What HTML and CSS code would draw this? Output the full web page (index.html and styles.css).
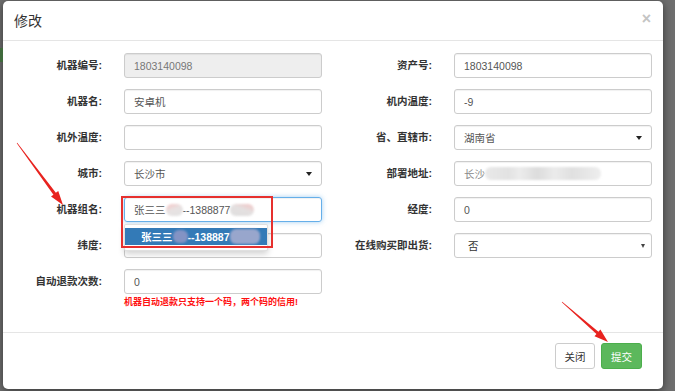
FILE: index.html
```html
<!DOCTYPE html>
<html lang="zh-CN">
<head>
    <meta charset="UTF-8">
    <title>修改</title>
    <link rel="stylesheet" href="styles.css">
</head>
<body>
    <div class="page-bit"></div>

    <div class="modal">
        <div class="modal-header">
            <span class="modal-title">修改</span>
            <span class="close">×</span>
        </div>

        <div class="modal-body">
            <div class="form-grid">
                <div class="form-group">
                    <label>机器编号:</label>
                    <div class="form-control disabled">1803140098</div>
                </div>
                <div class="form-group">
                    <label>资产号:</label>
                    <div class="form-control">1803140098</div>
                </div>

                <div class="form-group">
                    <label>机器名:</label>
                    <div class="form-control">安卓机</div>
                </div>
                <div class="form-group">
                    <label>机内温度:</label>
                    <div class="form-control">-9</div>
                </div>

                <div class="form-group">
                    <label>机外温度:</label>
                    <div class="form-control"></div>
                </div>
                <div class="form-group">
                    <label>省、直辖市:</label>
                    <div class="form-control select">湖南省<span class="caret"></span></div>
                </div>

                <div class="form-group">
                    <label>城市:</label>
                    <div class="form-control select">长沙市<span class="caret"></span></div>
                </div>
                <div class="form-group">
                    <label>部署地址:</label>
                    <div class="form-control muted">长沙<span class="blur blur-addr"></span></div>
                </div>

                <div class="form-group">
                    <label>机器组名:</label>
                    <div class="control-wrap">
                        <div class="form-control focus">张三三<span class="blur blur-a"></span>--1388877<span class="blur blur-b"></span></div>
                        <div class="typeahead">
                            <div class="typeahead-item active">张三三<span class="blur blur-c"></span>--138887<span class="blur blur-d"></span></div>
                        </div>
                        <div class="mark-box"></div>
                    </div>
                </div>
                <div class="form-group">
                    <label>经度:</label>
                    <div class="form-control">0</div>
                </div>

                <div class="form-group">
                    <label>纬度:</label>
                    <div class="form-control"></div>
                </div>
                <div class="form-group">
                    <label>在线购买即出货:</label>
                    <div class="form-control select native">否<span class="caret small"></span></div>
                </div>

                <div class="form-group">
                    <label>自动退款次数:</label>
                    <div class="control-wrap">
                        <div class="form-control">0</div>
                        <div class="help-text">机器自动退款只支持一个码，两个码的信用!</div>
                    </div>
                </div>
            </div>
        </div>

        <div class="modal-footer">
            <button class="btn btn-default">关闭</button>
            <button class="btn btn-success">提交</button>
        </div>
    </div>

    <!-- 标注箭头 -->
    <svg class="arrows" width="675" height="391" viewBox="0 0 675 391">
        <polygon points="16.76,143.18 53.43,194.63 51.02,196.42 63,205 58.26,191.04 55.85,192.83 17.24,142.82" />
        <polygon points="561.8,302.23 596.46,333.95 594.49,336.21 608,342 600.39,329.43 598.42,331.69 562.2,301.77" />
    </svg>
</body>
</html>
```

FILE: styles.css
```css
* {
    margin: 0;
    padding: 0;
    box-sizing: border-box;
}

body {
    width: 675px;
    height: 391px;
    overflow: hidden;
    background: #6e6e6e;
    font-family: 'Liberation Sans', 'Noto Sans CJK SC', sans-serif;
    font-size: 10.5px;
    color: #333;
    padding: 1px 0 0 3px;
}

.page-bit {
    position: absolute;
    left: 0;
    top: 48px;
    width: 3px;
    height: 14px;
    background: #3f6a3c;
}

.modal {
    width: 660px;
    height: 388px;
    background: white;
    border-radius: 5px;
    box-shadow: 0 2px 8px rgba(0, 0, 0, 0.5);
}

.modal-header {
    height: 40px;
    padding: 0 12px 0 11px;
    border-bottom: 1px solid #e5e5e5;
    display: flex;
    align-items: center;
    justify-content: space-between;
}

.modal-title {
    font-size: 14px;
    color: #333;
    margin-top: -2px;
}

.close {
    font-size: 16px;
    font-weight: bold;
    color: #c4c4c4;
    margin-top: -4px;
}

.modal-body {
    padding: 12px 0 24px;
}

.form-grid {
    display: grid;
    grid-template-columns: 330px 330px;
    row-gap: 11px;
}

.form-group {
    display: flex;
    align-items: flex-start;
}

.form-group label {
    width: 99px;
    margin-right: 22px;
    text-align: right;
    font-weight: bold;
    line-height: 25px;
    color: #333;
}

.control-wrap {
    position: relative;
    width: 198px;
}

.form-control {
    width: 198px;
    height: 25px;
    padding: 0 9px;
    border: 1px solid #ccc;
    border-radius: 3px;
    display: flex;
    align-items: center;
    color: #555;
    white-space: nowrap;
    box-shadow: inset 0 1px 1px rgba(0, 0, 0, 0.06);
}

.form-control.disabled {
    background: #eee;
    color: #777;
}

.form-control.muted {
    color: #888;
}

.form-control.focus {
    border-color: #66afe9;
    box-shadow: inset 0 1px 1px rgba(0, 0, 0, 0.06), 0 0 5px rgba(102, 175, 233, 0.6);
}

.form-control.native {
    padding: 0 6px 0 13px;
    color: #333;
}

.caret {
    margin-left: auto;
    width: 0;
    height: 0;
    border-left: 3.5px solid transparent;
    border-right: 3.5px solid transparent;
    border-top: 4px solid #222;
}

.caret.small {
    border-left-width: 2.5px;
    border-right-width: 2.5px;
    border-top-width: 4px;
    border-top-color: #444;
}

.blur {
    display: inline-block;
    height: 12px;
    border-radius: 6px;
    filter: blur(1.2px);
}

.blur-a {
    width: 17px;
    background: linear-gradient(160deg, #f6c4c4 0%, #e8e2e2 45%, #e2e2e2 100%);
}

.blur-b {
    width: 24px;
    background: linear-gradient(200deg, #f4c3c3 0%, #e4e0e0 45%, #dedede 100%);
}

.blur-addr {
    width: 116px;
    height: 13px;
    background: linear-gradient(90deg, #e9e9e9 0%, #e2e2e2 20%, #ececec 30%, #dcdcdc 45%, #ebebeb 60%, #e0e0e0 75%, #eeeeee 100%);
}

.typeahead {
    position: absolute;
    top: 27px;
    left: 0;
    width: 144px;
    padding: 3px 0 5px;
    background: white;
    border: 1px solid rgba(0, 0, 0, 0.12);
    border-radius: 2px;
    box-shadow: 0 3px 6px rgba(0, 0, 0, 0.18);
    z-index: 2;
}

.typeahead-item {
    height: 17px;
    padding-left: 16px;
    display: flex;
    align-items: center;
    white-space: nowrap;
    font-weight: bold;
}

.typeahead-item.active {
    background: #337ab7;
    color: white;
}

.blur-c {
    width: 15px;
    height: 13px;
    background: #8393c4;
}

.blur-d {
    width: 30px;
    height: 15px;
    background: #98a6cc;
}

.mark-box {
    position: absolute;
    left: -3px;
    top: -1px;
    width: 152px;
    height: 52px;
    border: 2px solid #e6302e;
    z-index: 3;
}

.help-text {
    margin-top: 2px;
    line-height: 12px;
    font-size: 9px;
    font-weight: bold;
    color: #f11;
    white-space: nowrap;
}

.modal-footer {
    border-top: 1px solid #e5e5e5;
    padding: 10px 21px 0 0;
    display: flex;
    justify-content: flex-end;
    gap: 6px;
}

.btn {
    height: 26px;
    padding: 0;
    border-radius: 3px;
    font-family: 'Liberation Sans', 'Noto Sans CJK SC', sans-serif;
    font-size: 10.5px;
    white-space: nowrap;
    cursor: pointer;
}

.btn-default {
    width: 40px;
    background: white;
    border: 1px solid #ccc;
    color: #333;
}

.btn-success {
    width: 41px;
    background: #5cb85c;
    border: 1px solid #4cae4c;
    color: white;
}

.arrows {
    position: absolute;
    top: 0;
    left: 0;
    pointer-events: none;
    z-index: 5;
}

.arrows polygon {
    fill: #e8231f;
}
```
